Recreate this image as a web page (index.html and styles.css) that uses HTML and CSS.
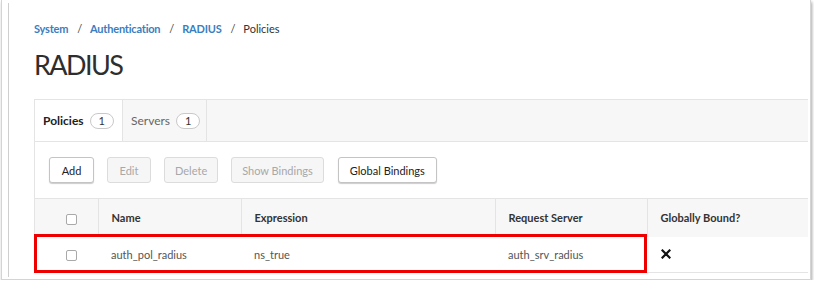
FILE: index.html
```html
<!DOCTYPE html>
<html lang="en">
<head>
  <meta charset="UTF-8">
  <title>RADIUS - Policies</title>
  <link rel="stylesheet" href="styles.css">
</head>
<body>
  <div class="window">
    <div class="frame">
      <!-- Breadcrumb -->
      <div class="crumbs">
        <a href="#">System</a><span class="sep">/</span>
        <a href="#">Authentication</a><span class="sep">/</span>
        <a href="#">RADIUS</a><span class="sep">/</span>
        <span class="current">Policies</span>
      </div>
      <h1>RADIUS</h1>

      <!-- Panel -->
      <div class="panel">
        <div class="tabs">
          <div class="tab active">Policies <span class="count">1</span></div>
          <div class="tab">Servers <span class="count">1</span></div>
        </div>

        <div class="toolbar">
          <button class="btn btn-add">Add</button>
          <button class="btn" disabled>Edit</button>
          <button class="btn" disabled>Delete</button>
          <button class="btn" disabled>Show Bindings</button>
          <button class="btn">Global Bindings</button>
        </div>

        <div class="table-wrap">
          <table>
            <thead>
              <tr>
                <th class="col-check"><span class="check"></span></th>
                <th class="col-name">Name</th>
                <th class="col-expr">Expression</th>
                <th class="col-server">Request Server</th>
                <th class="col-bound">Globally Bound?</th>
              </tr>
            </thead>
            <tbody>
              <tr>
                <td class="col-check"><span class="check"></span></td>
                <td>auth_pol_radius</td>
                <td>ns_true</td>
                <td>auth_srv_radius</td>
                <td>
                  <svg class="cross" width="10" height="10" viewBox="0 0 10 10">
                    <path d="M1.5 1.5 L8.5 8.5 M8.5 1.5 L1.5 8.5" stroke="#111" stroke-width="2.2" stroke-linecap="square"/>
                  </svg>
                </td>
              </tr>
            </tbody>
          </table>
          <div class="highlight"></div>
        </div>
      </div>
    </div>
  </div>
</body>
</html>
```

FILE: styles.css
```css
:root {
  --link-blue: #3a7dc0;
  --text-dark: #333333;
  --text-mid: #555555;
  --line: #e4e4e4;
  --bar-bg: #f7f7f7;
}
body {
  margin: 0;
  background: #ffffff;
  font-family: Lato, "Open Sans", sans-serif;
  color: var(--text-dark);
}
/* Window frame */
.window {
  margin-left: 1px;
  width: 810px;
  height: 280px;
  border: 1px solid #d4d4d4;
  border-top: none;
  box-shadow: 1px 2px 3px rgba(0,0,0,0.35);
  overflow: hidden;
  box-sizing: border-box;
}
.frame {
  margin: 3px 0 0 6px;
  height: 274px;
  border-left: 1px solid #cfcfcf;
  padding: 17px 0 0 25px;
  box-sizing: border-box;
}
/* Breadcrumb */
.crumbs {
  font-size: 11px;
  height: 18px;
  line-height: 18px;
}
.crumbs a {
  color: var(--link-blue);
  text-decoration: none;
  font-weight: bold;
  letter-spacing: -0.2px;
}
.crumbs .sep {
  margin: 0 5px 0 9px;
  color: #444;
}
.crumbs .current {
  color: var(--text-dark);
}
h1 {
  margin: 10px 0 0 0;
  font-size: 27px;
  font-weight: normal;
  letter-spacing: -1.6px;
  line-height: 34px;
  height: 51px;
  color: #2e2e2e;
}
/* Panel */
.panel {
  width: 773px;
  border-top: 1px solid var(--line);
  border-left: 1px solid var(--line);
}
.tabs {
  display: flex;
  height: 41px;
  background: var(--bar-bg);
  border-bottom: 1px solid var(--line);
}
.tab {
  display: flex;
  align-items: center;
  gap: 6px;
  padding: 0 8px;
  font-size: 12px;
  color: #666;
  border-right: 1px solid var(--line);
  box-sizing: border-box;
}
.tab:first-child {
  width: 88px;
}
.tab:nth-child(2) {
  width: 84px;
}
.tab.active {
  background: #ffffff;
  color: #222;
  font-weight: bold;
}
.count {
  display: inline-block;
  min-width: 22px;
  height: 14px;
  line-height: 14px;
  border: 1px solid #c9c9c9;
  border-radius: 8px;
  text-align: center;
  font-size: 11px;
  font-weight: normal;
  color: #333;
  background: #fff;
}
/* Toolbar */
.toolbar {
  display: flex;
  gap: 13px;
  padding: 15px 0 15px 14px;
}
.btn {
  height: 26px;
  min-width: 44px;
  padding: 0 10px;
  font-family: Lato, "Open Sans", sans-serif;
  font-size: 11px;
  color: #222;
  background: #ffffff;
  border: 1px solid #c4c4c4;
  border-radius: 3px;
  box-shadow: 0 1px 1px rgba(0,0,0,0.2);
  cursor: pointer;
}
.btn-add {
  width: 45px;
}
.btn:last-child {
  margin-left: 1px;
  padding: 0 11px;
}
.btn:disabled {
  color: #a8a8a8;
  background: #f6f6f6;
  border-color: #dcdcdc;
  box-shadow: none;
  cursor: default;
}
/* Table */
.table-wrap {
  position: relative;
}
table {
  width: 100%;
  table-layout: fixed;
  border-collapse: collapse;
  font-size: 11px;
}
th, td {
  box-sizing: border-box;
  padding: 0 0 0 13px;
  text-align: left;
}
th {
  height: 38px;
  background: var(--bar-bg);
  font-weight: bold;
  color: #333;
  border-top: 1px solid var(--line);
  border-left: 1px solid var(--line);
}
th:first-child {
  border-left: none;
}
td {
  height: 36px;
  color: var(--text-mid);
  border-bottom: 1px solid var(--line);
}
.col-check {
  width: 63px;
  padding-left: 31px;
}
.col-name { width: 143px; }
.col-expr { width: 254px; }
.col-server { width: 152px; }
.check {
  display: inline-block;
  width: 9px;
  height: 9px;
  border: 1px solid #a9a9a9;
  border-radius: 2px;
  background: #fff;
  vertical-align: middle;
}
.cross {
  display: block;
  margin-left: 1px;
}
/* Red annotation box */
.highlight {
  position: absolute;
  left: -1px;
  top: 36px;
  width: 607px;
  height: 33px;
  border: 3px solid #ee0000;
}
```
